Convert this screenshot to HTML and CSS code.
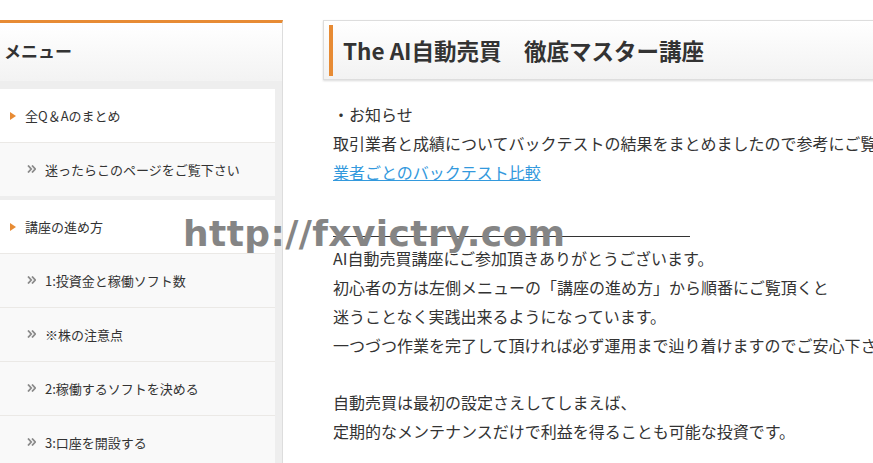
FILE: index.html
```html
<!DOCTYPE html>
<html lang="ja">
  <head>
    <meta charset="UTF-8" />
    <meta name="viewport" content="width=device-width, initial-scale=1.0" />
    <title>The AI自動売買　徹底マスター講座</title>
    <link rel="stylesheet" href="styles.css">
  </head>
  <body>
    <div class="page">
      <aside class="sidebar">
        <h3 class="sidebar-title">メニュー</h3>
        <ul class="menu">
          <li class="menu-group">
            <a class="menu-item parent" href="#"><span class="tri"></span>全Q＆Aのまとめ</a>
            <a class="menu-item child" href="#">
              <svg class="chev" width="9" height="8" viewBox="0 0 9 8"><polyline points="1,0.5 4.2,4 1,7.5" /><polyline points="5,0.5 8.2,4 5,7.5" /></svg>迷ったらこのページをご覧下さい</a>
          </li>
          <li class="menu-group">
            <a class="menu-item parent" href="#"><span class="tri"></span>講座の進め方</a>
            <a class="menu-item child" href="#">
              <svg class="chev" width="9" height="8" viewBox="0 0 9 8"><polyline points="1,0.5 4.2,4 1,7.5" /><polyline points="5,0.5 8.2,4 5,7.5" /></svg>1:投資金と稼働ソフト数</a>
            <a class="menu-item child" href="#">
              <svg class="chev" width="9" height="8" viewBox="0 0 9 8"><polyline points="1,0.5 4.2,4 1,7.5" /><polyline points="5,0.5 8.2,4 5,7.5" /></svg>※株の注意点</a>
            <a class="menu-item child" href="#">
              <svg class="chev" width="9" height="8" viewBox="0 0 9 8"><polyline points="1,0.5 4.2,4 1,7.5" /><polyline points="5,0.5 8.2,4 5,7.5" /></svg>2:稼働するソフトを決める</a>
            <a class="menu-item child" href="#">
              <svg class="chev" width="9" height="8" viewBox="0 0 9 8"><polyline points="1,0.5 4.2,4 1,7.5" /><polyline points="5,0.5 8.2,4 5,7.5" /></svg>3:口座を開設する</a>
          </li>
        </ul>
      </aside>

      <main class="content">
        <div class="title-box">
          <h1>The AI自動売買　徹底マスター講座</h1>
        </div>

        <div class="post">
          <p>・お知らせ</p>
          <p>取引業者と成績についてバックテストの結果をまとめましたので参考にご覧下さい。</p>
          <p><a href="#">業者ごとのバックテスト比較</a></p>
          <p>&nbsp;</p>
          <div class="rule"></div>
          <p>AI自動売買講座にご参加頂きありがとうございます。</p>
          <p>初心者の方は左側メニューの「講座の進め方」から順番にご覧頂くと</p>
          <p>迷うことなく実践出来るようになっています。</p>
          <p>一つづつ作業を完了して頂ければ必ず運用まで辿り着けますのでご安心下さい。</p>
          <p>&nbsp;</p>
          <p>自動売買は最初の設定さえしてしまえば、</p>
          <p>定期的なメンテナンスだけで利益を得ることも可能な投資です。</p>
        </div>
      </main>
    </div>

    <div class="watermark">http://fxvictry.com</div>
  </body>
</html>
```

FILE: styles.css
```css
html,
body {
  margin: 0;
  padding: 0;
  overflow: hidden;
  background-color: #fff;
}

body {
  font-family: "Noto Sans CJK JP", "Noto Sans", sans-serif;
  color: #333;
}

.page {
  display: flex;
  align-items: flex-start;
  padding-top: 20px;
}

/* sidebar */

.sidebar {
  width: 275px;
  flex-shrink: 0;
  background-color: #eeeeee;
  border-top: 3px solid #e78b34;
  border-right: 1px solid #dddddd;
  padding-right: 7px;
  height: 460px;
}

.sidebar-title {
  margin: 0 -7px 8px 0;
  height: 58px;
  line-height: 56px;
  padding-left: 4px;
  font-size: 17px;
  font-weight: bold;
  color: #333;
  background: linear-gradient(#ffffff, #f3f3f3);
}

.menu {
  list-style: none;
  margin: 0;
  padding: 0;
}

.menu-group {
  margin-bottom: 4px;
}

.menu-item {
  display: flex;
  align-items: center;
  height: 53px;
  border-bottom: 1px solid #ebe9e6;
  font-size: 13px;
  color: #333;
  text-decoration: none;
}

.menu-item:last-child {
  border-bottom: none;
}

.menu-item.parent {
  background-color: #fff;
  padding-left: 10px;
}

.menu-item.child {
  background-color: #f9f9f9;
  padding-left: 27px;
}

.tri {
  width: 0;
  height: 0;
  border-left: 6px solid #e78b34;
  border-top: 4px solid transparent;
  border-bottom: 4px solid transparent;
  margin-right: 9px;
}

.chev {
  margin-right: 9px;
  margin-top: -2px;
}

.chev polyline {
  fill: none;
  stroke: #8a8a8a;
  stroke-width: 1.8;
}

/* main */

.content {
  margin-left: 40px;
  width: 860px;
  flex-shrink: 0;
}

.title-box {
  height: 50px;
  padding: 4px 5px;
  border: 1px solid #dddddd;
  background: linear-gradient(#ffffff, #f2f2f2);
  box-shadow: 0 1px 2px rgba(0, 0, 0, 0.15);
}

.title-box h1 {
  margin: 0;
  height: 51px;
  line-height: 50px;
  border-left: 4px solid #e78b34;
  padding-left: 10px;
  font-size: 22.5px;
  font-weight: bold;
  color: #333;
}

.post {
  margin-top: 20px;
  padding-left: 10px;
  font-size: 16px;
  line-height: 28.8px;
  white-space: nowrap;
}

.post p {
  margin: 0;
}

.post a {
  color: #3399dd;
  text-decoration: underline;
}

.rule {
  width: 357px;
  height: 21px;
  border-bottom: 1px solid #333;
  margin-bottom: 7px;
}

.watermark {
  position: absolute;
  left: 183px;
  top: 216px;
  font-family: "DejaVu Sans", sans-serif;
  font-weight: bold;
  font-size: 36px;
  line-height: 36px;
  letter-spacing: 0.4px;
  color: #858585;
}
```
